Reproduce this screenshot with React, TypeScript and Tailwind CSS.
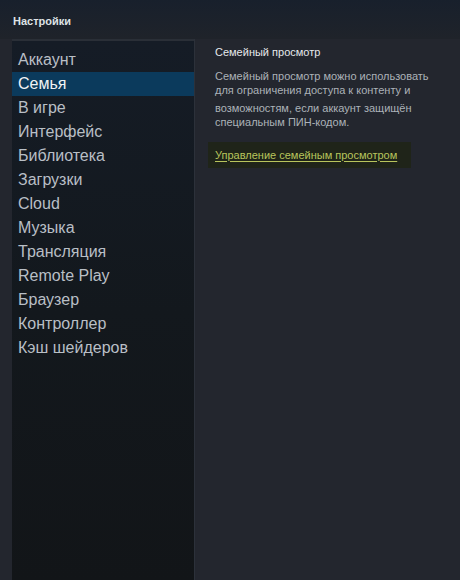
import React from 'react'

const items = [
  'Аккаунт',
  'Семья',
  'В игре',
  'Интерфейс',
  'Библиотека',
  'Загрузки',
  'Cloud',
  'Музыка',
  'Трансляция',
  'Remote Play',
  'Браузер',
  'Контроллер',
  'Кэш шейдеров',
]

export default function App() {
  const selected = 'Семья'

  return (
    <div className="w-[460px] h-[580px] flex flex-col bg-[#23262e] font-['Liberation_Sans',Arial,sans-serif] overflow-hidden">
      {/* заголовок */}
      <div className="h-[39px] shrink-0 flex items-center pl-[13px] pt-[4px] bg-gradient-to-b from-[#18202c] to-[#1f232a]">
        <span className="text-[11px] font-bold text-[#dfe3e6]">Настройки</span>
      </div>

      <div className="flex flex-1 min-h-0">
        {/* меню */}
        <div className="ml-[12px] w-[184px] border-t-2 border-[#2a2f37] bg-gradient-to-b from-[#151c26] via-[#13181d] to-[#121518] pt-[7px]">
          {items.map(item => (
            <div
              key={item}
              className={`h-[24px] flex items-center pl-[6px] text-[16px] leading-none ${
                item === selected ? 'bg-[#0b3a5c] text-[#f1f3f5]' : 'text-[#b9bfc6]'
              }`}
            >
              {item}
            </div>
          ))}
        </div>

        {/* содержимое */}
        <div className="flex-1 border-l border-[#2c313a] pl-[20px] pr-[20px] pt-[6px]">
          <div className="text-[11px] text-[#e6e9ec] leading-[14px]">Семейный просмотр</div>
          <div className="mt-[10px] text-[11px] text-[#acb2b8] leading-[14px] w-[225px]">
            Семейный просмотр можно использовать для ограничения доступа к контенту и
          </div>
          <div className="mt-[4px] text-[11px] text-[#acb2b8] leading-[14px] w-[225px]">
            возможностям, если аккаунт защищён специальным ПИН-кодом.
          </div>
          <div className="mt-[13px] -ml-[7px] w-[203px] h-[26px] flex items-center pl-[7px] bg-[#1f2419]">
            <span className="whitespace-nowrap text-[11px] text-[#b8c45c] underline underline-offset-2">
              Управление семейным просмотром
            </span>
          </div>
        </div>
      </div>
    </div>
  )
}
